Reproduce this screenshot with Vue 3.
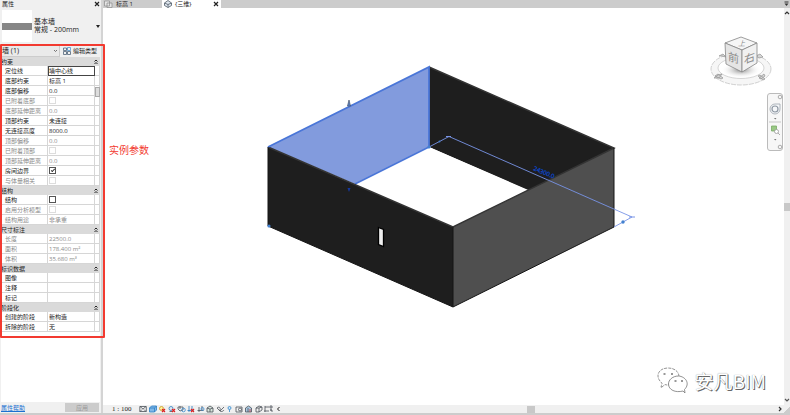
<script setup>
import { ref, reactive } from 'vue'

const groups = reactive([
  {
    name: '约束',
    rows: [
      { label: '定位线', value: '墙中心线', active: true },
      { label: '底部约束', value: '标高 1' },
      { label: '底部偏移', value: '0.0' },
      { label: '已附着底部', check: true, on: false, off: true },
      { label: '底部延伸距离', value: '0.0', off: true },
      { label: '顶部约束', value: '未连接' },
      { label: '无连接高度', value: '8000.0' },
      { label: '顶部偏移', value: '0.0', off: true },
      { label: '已附着顶部', check: true, on: false, off: true },
      { label: '顶部延伸距离', value: '0.0', off: true },
      { label: '房间边界', check: true, on: true },
      { label: '与体量相关', check: true, on: false, off: true }
    ]
  },
  {
    name: '结构',
    rows: [
      { label: '结构', check: true, on: false },
      { label: '启用分析模型', check: true, on: false, off: true },
      { label: '结构用途', value: '非承重', off: true }
    ]
  },
  {
    name: '尺寸标注',
    rows: [
      { label: '长度', value: '22500.0', off: true },
      { label: '面积', value: '178.400 m²', off: true },
      { label: '体积', value: '35.680 m³', off: true }
    ]
  },
  {
    name: '标识数据',
    rows: [
      { label: '图像', value: '' },
      { label: '注释', value: '' },
      { label: '标记', value: '' }
    ]
  },
  {
    name: '阶段化',
    rows: [
      { label: '创建的阶段', value: '新构造' },
      { label: '拆除的阶段', value: '无' }
    ]
  }
])

const category = ref('wall')
</script>

<template>
  <div class="app">
    <aside class="panel">
      <header class="panel-title">
        <span>属性</span>
        <button class="close" aria-label="关闭属性">
          <svg width="6" height="6" viewBox="0 0 6 6"><path d="M1 1l4 4M5 1L1 5" stroke="#222" stroke-width="1.2" /></svg>
        </button>
      </header>

      <button class="type-picker">
        <span class="thumb"></span>
        <span class="type-name">基本墙<br>常规 - 200mm</span>
        <svg width="4" height="3" viewBox="0 0 4 3"><path d="M0 0h4L2 3z" fill="#222" /></svg>
      </button>

      <section class="params">
        <div class="filter">
          <span class="select-box">
            <select v-model="category" aria-label="类别">
              <option value="wall">墙 (1)</option>
            </select>
            <svg width="5" height="4" viewBox="0 0 5 4"><path d="M1 1l1.500 1.500L4 1" fill="none" stroke="#555" stroke-width=".8" /></svg>
          </span>
          <button class="edit-type">
            <svg width="8" height="8" viewBox="0 0 8 8" fill="none" stroke="#4f6378" stroke-width=".8">
              <path d="M.5 1h3v2.500h-3zM.5 4.500h3v3h-3zM4.500 4.500h3v3h-3z" />
              <path d="M4.500.5h3v3h-3z" stroke="#4f94cf" />
              <path d="M3.500 6h1M3.500 2h1" />
            </svg>
            编辑类型
          </button>
        </div>

        <div class="table-wrap">
          <table>
            <colgroup>
              <col class="col-label">
              <col>
              <col class="col-end">
            </colgroup>
            <tbody v-for="g in groups" :key="g.name">
              <tr class="group">
                <th colspan="2" scope="rowgroup">{{ g.name }}</th>
                <th>
                  <svg width="4" height="6" viewBox="0 0 4 6"><path d="M.5 2.500L2 1l1.500 1.500M.5 5L2 3.500 3.500 5" fill="none" stroke="#222" /></svg>
                </th>
              </tr>
              <tr v-for="r in g.rows" :key="r.label" :class="{ off: r.off }">
                <th scope="row">{{ r.label }}</th>
                <td :class="{ active: r.active }">
                  <input v-if="r.check" v-model="r.on" type="checkbox" :disabled="r.off" :aria-label="r.label">
                  <input v-else v-model="r.value" type="text" :disabled="r.off" :aria-label="r.label">
                </td>
                <td></td>
              </tr>
            </tbody>
          </table>
          <i class="grip"></i>
        </div>
        <span class="note">实例参数</span>
      </section>

      <div class="blank"></div>
      <footer class="panel-foot">
        <a href="#help">属性帮助</a>
        <button disabled>应用</button>
      </footer>
    </aside>

    <main class="work">
      <nav class="tabs">
        <button class="tab">
          <svg width="9" height="8" viewBox="0 0 9 8" fill="#e4e4e4" stroke="#8b8b8b" stroke-width=".7"><path d="M.5 1h5v5h-5zM3 3h5v4.500H3z" /></svg>
          标高 1
        </button>
        <div class="tab current">
          <svg width="8" height="8" viewBox="0 0 8 8" fill="#dfe6ee" stroke="#4d5865" stroke-width=".8"><path d="M.5 3L4 .5 7.500 3v2.500L4 7.500.5 5.500z" /><path d="M4 7.500V4.500L.5 3M4 4.500L7.500 3" /></svg>
          <span>{三维}</span>
          <button class="close" aria-label="关闭视图">
            <svg width="6" height="6" viewBox="0 0 6 6"><path d="M1 1l4 4M5 1L1 5" stroke="#222" stroke-width="1.200" /></svg>
          </button>
        </div>
        <svg class="tab-list" width="5" height="6" viewBox="0 0 5 6"><path d="M.5 1h4" stroke="#333" /><path d="M.5 2.500h4L2.500 5z" fill="#333" /></svg>
      </nav>

      <div class="view">
        <div class="stage">
          <svg class="model" viewBox="103 8 681 397" preserveAspectRatio="xMidYMid meet">
            <path d="M429 67L614 148V227L429 147z" fill="#1e1e1e" />
            <path d="M268 147L429 67V147L355 184z" fill="#829bdd" />
            <path d="M429 147L355 184 453 227 527 190z" fill="#fff" />
            <path d="M268 147L453 227V307L268 226z" fill="#1e1e1e" />
            <path d="M453 227L614 148V227L453 307z" fill="#4f4f4f" />
            <path d="M429 147L355 184" stroke="#4a76d8" stroke-width="1.500" />
            <path d="M429 67L614 148L453 227L268 147" fill="none" stroke="#343434" stroke-width="1.500" />
            <path d="M268 147L429 67V147" fill="none" stroke="#4a76d8" stroke-width="1.800" />
            <path d="M268 147V226L453 307L614 227V148M453 227V307" fill="none" stroke="#151515" />
            <path d="M378.500 227.500l5 2v17l-5-2z" fill="#eee" stroke="#000" stroke-width="1.300" />
            <path d="M429 147l20-10.500L632 217l-18 10" fill="none" stroke="#7894e6" stroke-width=".9" />
            <path d="M446 136.500h5M629 217h6" stroke="#7894e6" />
            <path d="M347.500 106l1.500-6 1.500 6z" fill="#5b83c8" stroke="#46536b" stroke-width=".7" />
            <path d="M347.500 188h3l-1.500 4z" fill="#1438a0" />
            <g fill="#4381cf">
              <circle cx="429" cy="147" r="1.600" />
              <circle cx="269" cy="226" r="1.600" />
              <circle cx="439.500" cy="141.500" r=".9" />
              <circle cx="623" cy="222" r="1.700" />
            </g>
            <text x="533" y="170" font-size="6" fill="#0d44c0" stroke="#0d44c0" stroke-width=".3" transform="rotate(23 533 170)">24300.0</text>
          </svg>

          <svg class="cube" width="66" height="52" viewBox="0 0 66 52">
            <defs>
              <radialGradient id="shade"><stop offset="0" stop-color="#888" /><stop offset="1" stop-color="#fff" stop-opacity="0" /></radialGradient>
            </defs>
            <ellipse cx="33" cy="33" rx="30" ry="16" fill="#f6f6f6" stroke="#bdbdbd" stroke-width=".7" stroke-dasharray="5 1" />
            <ellipse cx="33" cy="32" rx="23" ry="10.500" fill="#fff" stroke="#c4c4c4" stroke-width=".7" />
            <ellipse cx="33" cy="34" rx="20" ry="8" fill="url(#shade)" />
            <g fill="#d6d6d6" stroke="#929292" stroke-width=".7">
              <path d="M7 40l3-2 5 4-2 1zM6 42l4-3 4-1-3 4zM52 39l5 4-2 1-5-4zM51 42l5-4 1 2-4 3z" />
              <path d="M11 20l4-2 3 3-4-1zM48 20l4-2 3 3-4 1z" />
            </g>
            <path d="M17 7L33 1l16 6-15 7z" fill="#f6f6f6" stroke="#858585" stroke-width=".8" />
            <path d="M17 7l17 7v22L18 28z" fill="#e5e5e5" stroke="#858585" stroke-width=".8" />
            <path d="M49 7l-15 7v22l15-9z" fill="#f1f1f1" stroke="#858585" stroke-width=".8" />
            <g fill="#8c8c8c" font-size="11">
              <text transform="translate(20 24) skewY(18)">前</text>
              <text transform="translate(36 28) skewY(-20)">右</text>
              <text font-size="7" transform="translate(30 10) skewX(-15)">上</text>
            </g>
          </svg>

          <div class="navbar">
            <svg width="16" height="58" viewBox="0 0 16 58" fill="none" stroke="#999" stroke-width=".8">
              <circle cx="13" cy="4" r="1.800" />
              <path d="M8 11h5v5a5 5 0 1 1-5-5z" stroke="#9da5ad" fill="#f5f7f9" />
              <circle cx="8" cy="16" r="3" stroke="#8f98a3" stroke-width="1.200" />
              <path d="M2 29h12" stroke="#bbb" />
              <path d="M4.500 33h5v5h-5z" fill="#99c884" stroke="#79a966" />
              <circle cx="9.500" cy="38.500" r="2" fill="#fff" />
              <path d="M11 40l2 2" />
              <path d="M7 25h2.500L8.250 26.500zM7 46h2.500L8.250 47.500z" fill="#777" stroke="none" />
              <circle cx="13" cy="54" r="1.800" />
            </svg>
          </div>

          <div class="brand">
            <svg width="32" height="27" viewBox="0 0 32 27" fill="#fff" stroke="#777" stroke-width=".8">
              <path d="M5 20l-1 .2 1-4C-3 9 2 1 11 1c7 0 11 4 11 9-6-.5-11 3-10 8-2 0-3 0-4-.5z" stroke-dasharray="3 1" />
              <path d="M26 24l2 2-.5-3.500c6-6 1-13-6-13.500-6 0-10 4-10 8 0 6 7 9 14.500 7z" />
              <path d="M6.500 7h2M14 7h2M17.500 14h2M24 14h2" stroke-width="1.500" />
            </svg>
            <span>安凡BIM</span>
          </div>
        </div>
        <div class="v-scroll">
          <svg width="6" height="5" viewBox="0 0 6 5"><path d="M1 4l2-2 2 2" fill="none" stroke="#333" stroke-width="1.200" /></svg>
          <i></i>
          <svg width="6" height="5" viewBox="0 0 6 5"><path d="M1 1l2 2 2-2" fill="none" stroke="#555" stroke-width="1.200" /></svg>
        </div>
      </div>

      <footer class="status">
        <span class="scale">1 : 100</span>
        <svg width="144" height="8" viewBox="0 0 144 8" fill="none" stroke="#4b5259" stroke-width=".8">
          <path d="M.8 1.500h6.500v5H.8zM1 1.500l3 2.500 3-2.500M1 6.500l2-2M7 6.500l-2-2" />
          <path d="M10.500 3l2-2h5v4l-2 2h-5zM10.500 3h5v4M15.500 3l2-2" fill="#7fb8e8" stroke="#2d7fc4" />
          <circle cx="22.500" cy="3.500" r="2" fill="#fff2a0" stroke="#c99a20" />
          <path d="M23 4l3 3M26 4l-3 3" stroke="#d22" stroke-width="1.200" />
          <circle cx="32" cy="3.500" r="2" fill="#dce9f6" stroke="#357fbe" />
          <path d="M30.500 6.500h3" /><path d="M33 4l3 3M36 4l-3 3" stroke="#d22" stroke-width="1.200" />
          <path d="M39 2h5v3l-3 1-2-2zM41 1v3" /><circle cx="44.500" cy="5" r="1.800" stroke="#3a8bd0" />
          <path d="M48.500 5.500h6M50 1v6M53 1v4" stroke="#277ac0" /><path d="M52 4l3 3M55 4l-3 3" stroke="#d22" stroke-width="1.200" />
          <path d="M58.500 5.500h6M60 2v5M63 1v4" /><circle cx="63.500" cy="4" r="1.500" stroke="#3a8bd0" />
          <path d="M68 3l3-2 3 2v4h-6zM68 3l3 1 3-1M71 4v3" fill="#d7e7dd" />
          <path d="M78 3c2-2 4 0 3 2s3 2 4 0M78 3l3 3 4-4" />
          <circle cx="90.500" cy="3" r="1.500" fill="#cbe6fa" stroke="#3388c9" /><path d="M90.500 4.500V7" stroke="#3388c9" />
          <path d="M97 2h6v5h-6z" /><circle cx="101" cy="4.500" r="1.500" />
          <path d="M106.500 3l3-2 3 2v4h-6zM109 3v4" fill="#aac9e3" /><path d="M111 4v3" stroke="#c33" />
          <path d="M117 3l3-2 3 1v3l-3 2h-3zM117 3h3v4M120 3l3-1" />
          <path d="M126 2h6v4M126 1v6M125 6h5M131 1h2v2M131 5h2v2" />
          <path d="M140.500 2L138.500 4l2 2" stroke="#222" stroke-width="1" />
        </svg>
        <div class="h-scroll"><i></i></div>
        <svg width="5" height="6" viewBox="0 0 5 6"><path d="M1 1l2 2-2 2" fill="none" stroke="#333" stroke-width="1.200" /></svg>
        <span class="corner"></span>
      </footer>
    </main>
  </div>
</template>

<style>
body {
  margin: 0;
}
</style>

<style scoped>
.app {
  display: flex;
  min-height: 100vh;
  box-sizing: border-box;
  border-bottom: 2px solid #ccc;
  background: #f0f0f0;
  color: #222;
  font: 6px/8px "Open Sans", "Noto Sans CJK SC", sans-serif;
}

button {
  padding: 0;
  border: 0;
  background: none;
  color: inherit;
  font: inherit;
}

svg {
  display: block;
  flex: none;
}

.panel {
  flex: 0 0 101px;
  display: flex;
  flex-direction: column;
  border-right: 2px solid #d4d4d4;
}

.panel-title {
  display: flex;
  justify-content: space-between;
  align-items: center;
  height: 8px;
  padding: 0 1px 0 2px;
}

.close {
  display: flex;
}

.type-picker {
  display: flex;
  align-items: center;
  gap: 2px;
  height: 36px;
  padding: 2px 1px 2px 2px;
  text-align: left;
}

.thumb {
  display: flex;
  align-items: center;
  width: 30px;
  height: 32px;
  background: #fff;
}

.thumb::before {
  content: "";
  width: 100%;
  height: 7px;
  background: #868686;
}

.type-name {
  flex: 1;
  font-size: 7px;
  white-space: nowrap;
}

.params {
  position: relative;
}

.params::after {
  content: "";
  position: absolute;
  z-index: 2;
  inset: 0 -4px -6px 0;
  border: 2px solid #f23a30;
  border-radius: 1px;
  pointer-events: none;
}

.note {
  position: absolute;
  z-index: 2;
  left: 109px;
  top: 99px;
  color: #f23a30;
  font-size: 10px;
  line-height: 14px;
  white-space: nowrap;
}

.filter {
  display: flex;
  align-items: center;
  gap: 3px;
  height: 13px;
}

.select-box {
  display: flex;
  align-items: center;
  flex: 1;
  height: 10px;
  margin-top: 2px;
  padding-right: 1px;
  border: 1px solid #ccc;
  border-width: 0 1px 1px 0;
  background: #eaeaea;
}

select {
  flex: 1;
  min-width: 0;
  appearance: none;
  border: 0;
  padding: 0 0 0 2px;
  background: none;
  color: inherit;
  font: inherit;
  font-size: 7px;
}

.edit-type {
  display: flex;
  align-items: center;
  gap: 2px;
  padding-right: 4px;
  white-space: nowrap;
}

.table-wrap {
  position: relative;
  display: flex;
  margin-right: 1px;
  background: #fff;
}

table {
  flex: 1;
  min-width: 0;
  table-layout: fixed;
  border-collapse: separate;
  border-spacing: 0;
}

.col-label {
  width: 48px;
}

.col-end {
  width: 5px;
}

th,
td {
  box-sizing: border-box;
  height: 10px;
  padding: 0;
  border-right: 1px solid #d6d6d6;
  border-bottom: 1px solid #d6d6d6;
  font-weight: normal;
  text-align: left;
  white-space: nowrap;
  line-height: 8px;
  vertical-align: middle;
}

th {
  padding-left: 5px;
}

.group th {
  height: 9px;
  padding-left: 1px;
  border: 0;
  background: #dadada;
}

.group th + th {
  padding: 0;
}

.group svg {
  margin-left: -1px;
}

.off {
  color: #8b8b8b;
}

td.active {
  border: 1px solid #444;
}

input[type="text"] {
  display: block;
  box-sizing: border-box;
  width: 100%;
  height: 8px;
  padding: 0 0 0 1px;
  border: 0;
  background: none;
  color: inherit;
  font: inherit;
}

td.active input {
  padding-left: 0;
}

input[type="checkbox"] {
  display: block;
  appearance: none;
  box-sizing: border-box;
  width: 7px;
  height: 7px;
  margin: 0 0 0 1px;
  border: 1px solid #555;
  background: #fff;
}

input[type="checkbox"]:disabled {
  border-color: #ddd;
}

input[type="checkbox"]:checked::before {
  content: "";
  display: block;
  width: 3px;
  height: 1px;
  margin: 1px;
  border: solid #333;
  border-width: 0 0 1px 1px;
  transform: rotate(-45deg);
}

.grip {
  position: absolute;
  top: 30px;
  right: 0;
  box-sizing: border-box;
  width: 5px;
  height: 10px;
  border: 1px solid #aaa;
  background: #ddd;
}

.blank {
  flex: 1;
  margin: 0 1px;
  background: #fff;
}

.panel-foot {
  display: flex;
  justify-content: space-between;
  align-items: center;
  height: 11px;
  padding: 0 2px 0 1px;
}

.panel-foot a {
  color: #1b70d0;
}

.panel-foot button {
  width: 34px;
  height: 9px;
  background: #ccc;
  color: #999;
}

.work {
  flex: 1;
  min-width: 0;
  display: flex;
  flex-direction: column;
}

.tabs {
  display: flex;
  height: 8px;
  background: #ccc;
}

.tab {
  display: flex;
  align-items: center;
  gap: 3px;
  width: 59px;
  padding-left: 1px;
  white-space: nowrap;
}

.tab.current {
  box-sizing: border-box;
  padding: 0 2px;
  background: #fff;
}

.tab.current span {
  flex: 1;
}

.tab-list {
  margin: 1px 1px 0 auto;
}

.view {
  flex: 1;
  display: flex;
  min-height: 0;
}

.stage {
  position: relative;
  flex: 1;
  min-width: 0;
  background: #fff;
}

.model {
  position: absolute;
  width: 100%;
  height: 100%;
}

.cube {
  position: absolute;
  top: 28px;
  right: 10px;
}

.navbar {
  position: absolute;
  top: 85px;
  right: 1px;
  box-sizing: border-box;
  border: 1px solid #bbb;
  border-radius: 3px;
  background: #f7f7f7;
}

.navbar svg {
  margin: -1px;
}

.brand {
  position: absolute;
  right: 18px;
  bottom: 11px;
  display: flex;
  align-items: center;
  gap: 6px;
  color: #fff;
  font-family: "Noto Sans CJK SC", sans-serif;
  font-size: 19px;
  line-height: 27px;
  text-shadow: 1px 1px 0 #666, 0 0 1px #888;
}

.v-scroll {
  flex: 0 0 6px;
  display: flex;
  flex-direction: column;
  justify-content: space-between;
  padding: 2px 0;
  background: #f0f0f0;
}

.v-scroll i {
  height: 8px;
  background: #c8c8c8;
}

.status {
  display: flex;
  align-items: center;
  height: 8px;
}

.scale {
  width: 27px;
  padding-left: 9px;
  font-family: "Liberation Serif", serif;
  font-size: 7px;
  white-space: nowrap;
}

.h-scroll {
  flex: 1;
  display: flex;
  justify-content: center;
}

.h-scroll i {
  width: 8px;
  height: 7px;
  background: #c8c8c8;
}

.corner {
  width: 7px;
  height: 7px;
  background: linear-gradient(135deg, transparent 50%, #ccc 50%);
}
</style>
